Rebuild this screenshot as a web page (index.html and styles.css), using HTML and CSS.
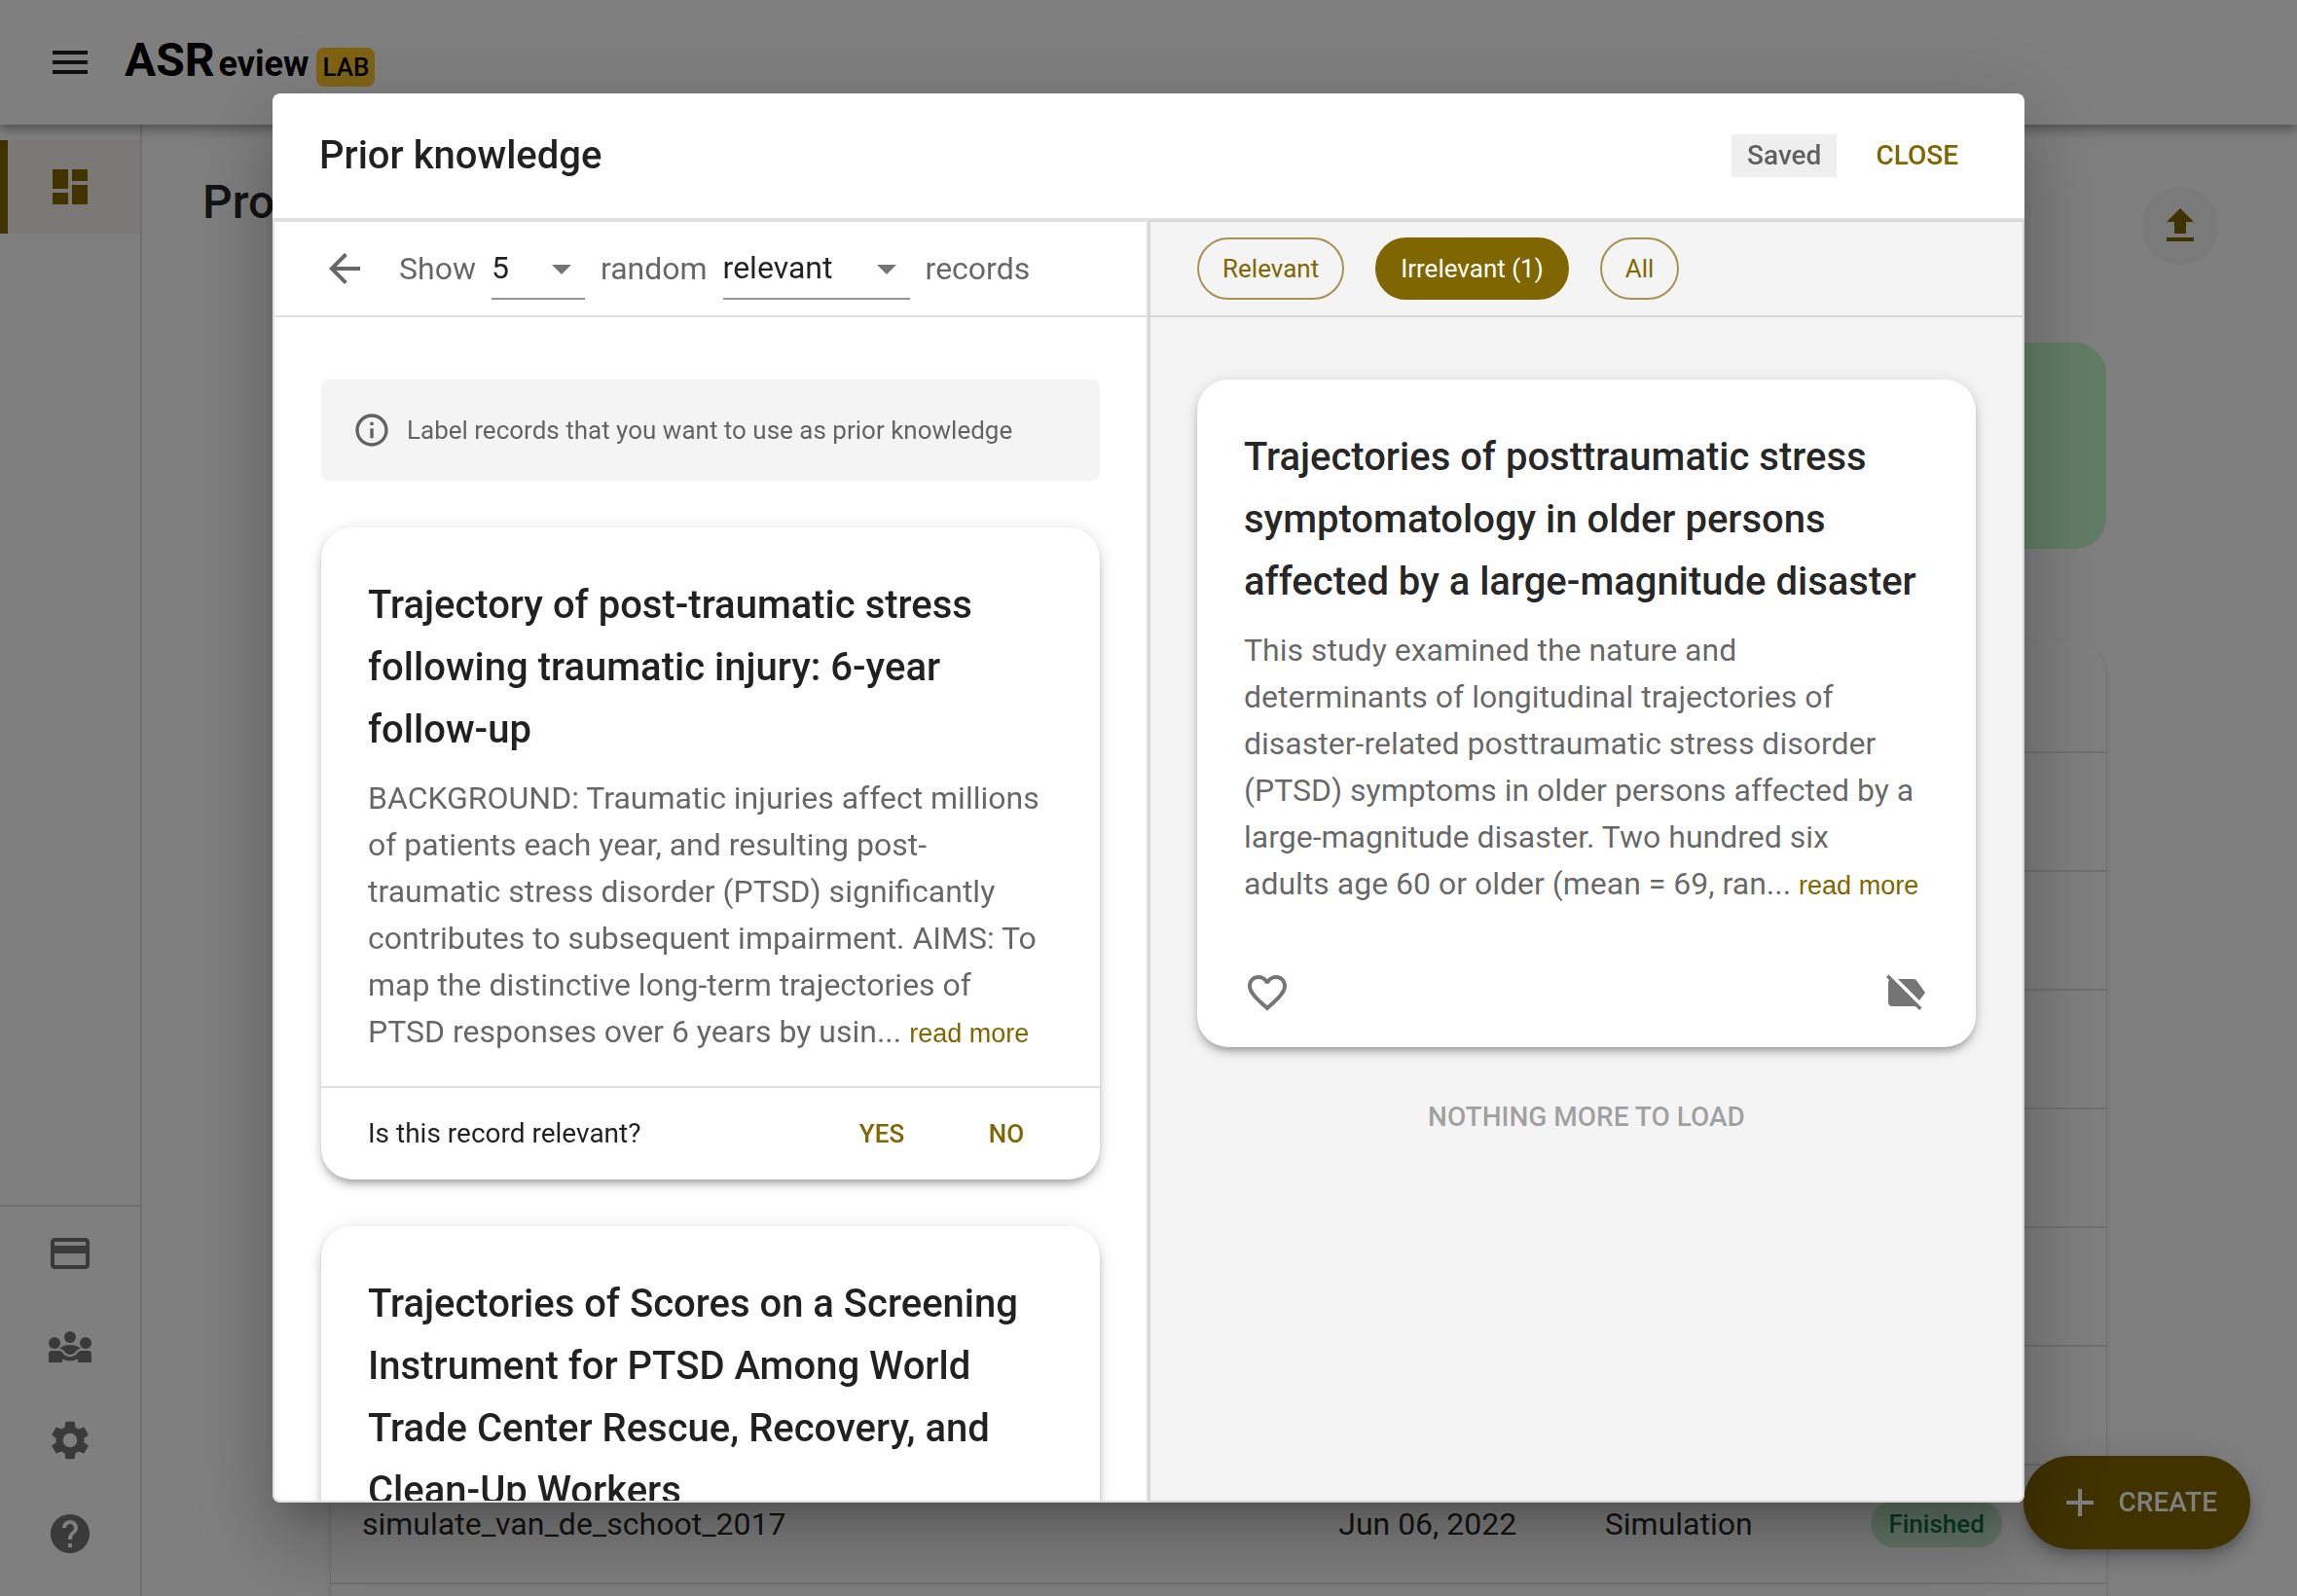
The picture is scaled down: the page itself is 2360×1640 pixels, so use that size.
FILE: index.html
```html
<!DOCTYPE html>
<html lang="en">
<head>
<meta charset="utf-8">
<title>ASReview LAB</title>
<meta name="viewport" content="width=device-width, initial-scale=1">
<link rel="stylesheet" href="styles.css">
</head>
<body>
<div class="app">
  <header class="topbar">
    <button class="icon-button" type="button" aria-label="Menu">
      <svg class="icon" viewBox="0 0 24 24"><path d="M3 18h18v-2H3v2zm0-5h18v-2H3v2zm0-7v2h18V6H3z"/></svg>
    </button>
    <a class="logo" href="#"><span class="logo-name"><span class="logo-big">ASR</span>eview</span><span class="logo-badge">LAB</span></a>
  </header>
  <div class="body">
    <nav class="sidebar">
      <a class="nav-item nav-active" href="#" aria-label="Projects">
        <svg class="icon" viewBox="0 0 24 24"><path d="M3 13h8V3H3v10zm0 8h8v-6H3v6zm10 0h8V11h-8v10zm0-18v6h8V3h-8z"/></svg>
      </a>
      <div class="nav-bottom">
        <a class="nav-item" href="#" aria-label="Donate">
          <svg class="icon" viewBox="0 0 24 24"><path d="M20 4H4c-1.110 0-1.990.89-1.990 2L2 18c0 1.110.89 2 2 2h16c1.110 0 2-.89 2-2V6c0-1.110-.89-2-2-2zm0 14H4v-6h16v6zm0-10H4V6h16v2z"/></svg>
        </a>
        <a class="nav-item" href="#" aria-label="Community">
          <svg class="icon" viewBox="0 0 24 24"><circle cx="4" cy="10" r="3"/><circle cx="20" cy="10" r="3"/><circle cx="12" cy="7" r="3"/><path d="M6.500 12.700C8 11.600 9.900 11 12 11s4 .6 5.500 1.700c-1 .2-1.700.6-2.300 1.300-.8 1.200-1.900 2-3.200 2s-2.400-.8-3.200-2c-.6-.7-1.300-1.100-2.300-1.300zM1 20v-4.500C1 14.600 1.700 14 2.500 14h3.800c.7 0 1.300.3 1.700.9.9 1.400 2.400 2.200 4 2.200s3.100-.8 4-2.200c.4-.6 1-.9 1.700-.9h3.800c.8 0 1.500.6 1.500 1.500V20h-7v-1.800c-1.200.6-2.500.9-4 .9s-2.800-.3-4-.9V20z"/></svg>
        </a>
        <a class="nav-item" href="#" aria-label="Settings">
          <svg class="icon" viewBox="0 0 24 24"><path d="M19.140 12.940c.04-.3.060-.61.060-.94 0-.32-.02-.64-.07-.94l2.030-1.580c.18-.14.230-.41.120-.61l-1.920-3.320c-.12-.22-.37-.29-.59-.22l-2.390.96c-.5-.38-1.030-.7-1.620-.94l-.36-2.540c-.04-.24-.24-.41-.48-.41h-3.840c-.24 0-.43.17-.47.41l-.36 2.540c-.59.24-1.130.57-1.620.94l-2.390-.96c-.22-.08-.47 0-.59.22L2.740 8.870c-.12.21-.08.470.12.610l2.030 1.580c-.05.3-.09.630-.09.940s.02.640.070.940l-2.030 1.580c-.18.14-.23.410-.12.610l1.920 3.320c.12.220.37.290.59.220l2.390-.96c.5.380 1.030.7 1.620.94l.36 2.540c.05.240.24.410.48.410h3.840c.24 0 .44-.17.470-.41l.36-2.540c.59-.24 1.130-.56 1.620-.94l2.390.96c.22.080.47 0 .59-.22l1.920-3.320c.12-.22.070-.47-.12-.61l-2.010-1.580zM12 15.600c-1.980 0-3.600-1.620-3.600-3.600s1.620-3.600 3.600-3.600 3.600 1.620 3.600 3.600-1.620 3.600-3.600 3.600z"/></svg>
        </a>
        <a class="nav-item" href="#" aria-label="Help">
          <svg class="icon" viewBox="0 0 24 24"><path d="M12 2C6.480 2 2 6.480 2 12s4.480 10 10 10 10-4.480 10-10S17.520 2 12 2zm1 17h-2v-2h2v2zm2.070-7.750l-.9.920C13.450 12.900 13 13.500 13 15h-2v-.5c0-1.100.45-2.100 1.170-2.830l1.240-1.260c.37-.36.590-.86.590-1.410 0-1.100-.9-2-2-2s-2 .9-2 2H8c0-2.210 1.790-4 4-4s4 1.790 4 4c0 .88-.36 1.680-.93 2.250z"/></svg>
        </a>
      </div>
    </nav>
    <main class="main">
      <div class="page-head">
        <h1 class="page-title">Projects</h1>
        <button class="upload" type="button" aria-label="Import project">
          <svg class="icon" viewBox="0 0 24 24"><path d="M9 16h6v-6h4l-7-7-7 7h4v6zm-4 2h14v2H5v-2z"/></svg>
        </button>
      </div>
      <div class="dashboard">
        <div class="stats"></div>
        <table class="projects">
          <thead><tr><th></th><th class="col-side"></th><th class="col-side"></th><th class="col-side"></th></tr></thead>
          <tbody>
            <tr><td></td><td></td><td></td><td></td></tr>
            <tr><td></td><td></td><td></td><td></td></tr>
            <tr><td></td><td></td><td></td><td></td></tr>
            <tr><td></td><td></td><td></td><td></td></tr>
            <tr><td></td><td></td><td></td><td></td></tr>
            <tr><td></td><td></td><td></td><td></td></tr>
            <tr><td>simulate_van_de_schoot_2017</td><td>Jun 06, 2022</td><td>Simulation</td><td><span class="status">Finished</span></td></tr>
            <tr><td></td><td></td><td></td><td></td></tr>
          </tbody>
        </table>
      </div>
    </main>
  </div>
  <button class="create" type="button">
    <svg class="icon" viewBox="0 0 24 24"><path d="M19 13h-6v6h-2v-6H5v-2h6V5h2v6h6v2z"/></svg>
    CREATE
  </button>
</div>

<div class="backdrop">
  <section class="dialog" role="dialog" aria-modal="true" aria-labelledby="dialog-title">
    <header class="dialog-head">
      <h2 class="dialog-title" id="dialog-title">Prior knowledge</h2>
      <span class="saved">Saved</span>
      <button class="text-button close" type="button">CLOSE</button>
    </header>
    <div class="panels">
      <section class="panel">
        <div class="toolbar">
          <button class="icon-button" type="button" aria-label="Back">
            <svg class="icon" viewBox="0 0 24 24"><path d="M20 11H7.830l5.590-5.590L12 4l-8 8 8 8 1.410-1.410L7.830 13H20v-2z"/></svg>
          </button>
          <label for="count">Show</label>
          <span class="select count">
            <select id="count"><option>5</option></select>
            <svg class="icon caret" viewBox="0 0 24 24"><path d="M7 10l5 5 5-5z"/></svg>
          </span>
          <label for="kind">random</label>
          <span class="select kind">
            <select id="kind"><option>relevant</option></select>
            <svg class="icon caret" viewBox="0 0 24 24"><path d="M7 10l5 5 5-5z"/></svg>
          </span>
          <span>records</span>
        </div>
        <div class="panel-body">
          <div class="alert">
            <svg class="icon-small" viewBox="0 0 24 24"><path d="M11 7h2v2h-2zm0 4h2v6h-2zm1-9C6.480 2 2 6.480 2 12s4.480 10 10 10 10-4.480 10-10S17.520 2 12 2zm0 18c-4.410 0-8-3.590-8-8s3.590-8 8-8 8 3.590 8 8-3.590 8-8 8z"/></svg>
            <span>Label records that you want to use as prior knowledge</span>
          </div>
          <article class="card">
            <div class="card-content">
              <h3 class="card-title">Trajectory of post-traumatic stress following traumatic injury: 6-year follow-up</h3>
              <p class="abstract">BACKGROUND: Traumatic injuries affect millions of patients each year, and resulting post-traumatic stress disorder (PTSD) significantly contributes to subsequent impairment. AIMS: To map the distinctive long-term trajectories of PTSD responses over 6 years by usin... <a class="more" href="#">read more</a></p>
            </div>
            <div class="card-question">
              <span class="question">Is this record relevant?</span>
              <button class="text-button answer" type="button">YES</button>
              <button class="text-button answer" type="button">NO</button>
            </div>
          </article>
          <article class="card">
            <div class="card-content">
              <h3 class="card-title">Trajectories of Scores on a Screening Instrument for PTSD Among World Trade Center Rescue, Recovery, and Clean-Up Workers</h3>
            </div>
          </article>
        </div>
      </section>
      <section class="panel panel-labeled">
        <div class="toolbar filters">
          <button class="chip" type="button">Relevant</button>
          <button class="chip chip-on" type="button">Irrelevant (1)</button>
          <button class="chip" type="button">All</button>
        </div>
        <div class="panel-body">
          <article class="card">
            <div class="card-content">
              <h3 class="card-title">Trajectories of posttraumatic stress symptomatology in older persons affected by a large-magnitude disaster</h3>
              <p class="abstract">This study examined the nature and determinants of longitudinal trajectories of disaster-related posttraumatic stress disorder (PTSD) symptoms in older persons affected by a large-magnitude disaster. Two hundred six adults age 60 or older (mean = 69, ran... <a class="more" href="#">read more</a></p>
            </div>
            <div class="card-actions">
              <button class="card-icon" type="button" aria-label="Mark as relevant">
                <svg class="icon" viewBox="0 0 24 24"><path d="M16.500 3c-1.740 0-3.410.81-4.500 2.090C10.910 3.810 9.240 3 7.500 3 4.420 3 2 5.420 2 8.500c0 3.780 3.400 6.860 8.550 11.540L12 21.350l1.450-1.320C18.600 15.360 22 12.280 22 8.500 22 5.420 19.580 3 16.500 3zm-4.400 15.550l-.1.100-.1-.1C7.140 14.240 4 11.390 4 8.500 4 6.500 5.500 5 7.500 5c1.540 0 3.040.99 3.570 2.360h1.870C13.460 5.990 14.960 5 16.500 5c2 0 3.500 1.500 3.500 3.500 0 2.890-3.140 5.740-7.900 10.050z"/></svg>
              </button>
              <button class="card-icon" type="button" aria-label="Remove label">
                <svg class="icon" viewBox="0 0 24 24"><path d="M3.250 2.750l17 17L19 21l-2-2H5c-1.100 0-2-.9-2-2V7c0-.55.230-1.050.59-1.410L2 4l1.250-1.250zM22 12l-4.370-6.160C17.270 5.330 16.670 5 16 5H8l11 11 3-4z"/></svg>
              </button>
            </div>
          </article>
          <button class="load" type="button" disabled>NOTHING MORE TO LOAD</button>
        </div>
      </section>
    </div>
  </section>
</div>
</body>
</html>
```

FILE: styles.css
```css
:root {
  --primary: #806600;
  --ink: rgba(0, 0, 0, 0.87);
  --muted: rgba(0, 0, 0, 0.6);
  --line: #e0e0e0;
}

* { box-sizing: border-box; }

body {
  margin: 0;
  font-family: Roboto, "Liberation Sans", sans-serif;
  font-size: 32px;
  line-height: 48px;
  color: var(--ink);
  background: #fff;
}

h1, h2, h3, p { margin: 0; font-weight: 400; }

button {
  border: 0;
  padding: 0;
  background: none;
  font: inherit;
  color: inherit;
  cursor: pointer;
}

a { color: inherit; text-decoration: none; }

.icon, .icon-small {
  display: block;
  flex: none;
  width: 48px;
  height: 48px;
  fill: currentColor;
}

.icon-small { width: 40px; height: 40px; }

.icon-button { flex: none; padding: 16px; }

/* Application frame */
.app {
  display: flex;
  flex-direction: column;
  height: 100vh;
  overflow: hidden;
}

.topbar {
  position: relative;
  display: flex;
  flex: none;
  align-items: center;
  gap: 16px;
  height: 128px;
  padding: 0 32px;
  background: #fff;
  box-shadow: 0 4px 8px -2px rgba(0, 0, 0, 0.2), 0 8px 10px rgba(0, 0, 0, 0.14), 0 2px 20px rgba(0, 0, 0, 0.12);
}

.logo {
  display: flex;
  align-items: baseline;
  gap: 8px;
  color: #000;
  font-weight: 700;
}

.logo-name { font-size: 36px; }
.logo-big { margin-right: 4px; font-size: 48px; }

.logo-badge {
  padding: 0 6px;
  border-radius: 8px;
  background: #ffc926;
  font-size: 26px;
  font-weight: 500;
  line-height: 40px;
}

.body { display: flex; flex: 1; min-height: 0; }

.sidebar {
  display: flex;
  flex: none;
  flex-direction: column;
  justify-content: space-between;
  width: 146px;
  padding-top: 16px;
  border-right: 2px solid var(--line);
}

.nav-item {
  display: flex;
  align-items: center;
  justify-content: center;
  height: 96px;
  color: #757575;
}

.nav-active {
  padding-right: 8px;
  border-left: 8px solid var(--primary);
  background: #f5f2eb;
  color: var(--primary);
}

.nav-bottom { padding-bottom: 16px; border-top: 2px solid var(--line); }

.main { flex: 1; min-width: 0; }

.page-head {
  display: flex;
  align-items: flex-start;
  justify-content: space-between;
  padding: 48px 80px 80px 62px;
}

.page-title { font-size: 48px; font-weight: 500; line-height: 64px; }

.upload {
  margin-top: 16px;
  padding: 16px;
  border-radius: 50%;
  background: #f5f5f5;
  color: var(--primary);
}

.dashboard { padding: 0 196px 0 194px; }

.stats {
  height: 212px;
  margin-bottom: 96px;
  border-radius: 32px;
  background: #c5fbcc;
}

.projects {
  width: 100%;
  table-layout: fixed;
  border-collapse: separate;
  border-spacing: 0;
  border-radius: 32px;
  box-shadow: 0 4px 2px -2px rgba(0, 0, 0, 0.2), 0 2px 2px rgba(0, 0, 0, 0.14), 0 2px 6px rgba(0, 0, 0, 0.12);
}

.projects th { height: 114px; border-bottom: 2px solid var(--line); }

.projects td {
  height: 122px;
  padding: 0 32px;
  border-bottom: 2px solid var(--line);
}

.col-side { width: 15%; }

.status {
  display: block;
  width: fit-content;
  padding: 0 18px;
  border-radius: 24px;
  background: #c5ebcf;
  color: #157347;
  font-size: 26px;
  font-weight: 500;
}

.create {
  position: fixed;
  right: 48px;
  bottom: 48px;
  display: flex;
  align-items: center;
  gap: 16px;
  height: 96px;
  padding: 0 34px;
  border-radius: 48px;
  background: var(--primary);
  color: #fff;
  font-size: 28px;
  font-weight: 500;
  box-shadow: 0 6px 10px -2px rgba(0, 0, 0, 0.2), 0 12px 20px rgba(0, 0, 0, 0.14), 0 2px 36px rgba(0, 0, 0, 0.12);
}

/* Dialog */
.backdrop {
  position: fixed;
  inset: 0;
  display: flex;
  justify-content: center;
  padding: 96px;
  background: rgba(0, 0, 0, 0.5);
}

.dialog {
  display: flex;
  flex-direction: column;
  width: 100%;
  max-width: 1800px;
  overflow: hidden;
  border-radius: 8px;
  background: #fff;
  box-shadow: 0 22px 30px -14px rgba(0, 0, 0, 0.2), 0 48px 76px 6px rgba(0, 0, 0, 0.14), 0 18px 92px 16px rgba(0, 0, 0, 0.12);
}

.dialog-head {
  display: flex;
  flex: none;
  align-items: center;
  height: 130px;
  padding: 0 52px 0 48px;
  border-bottom: 2px solid var(--line);
}

.dialog-title { flex: 1; font-size: 40px; font-weight: 500; }

.saved {
  padding: 0 16px;
  background: #efefef;
  color: var(--muted);
  font-size: 28px;
  font-weight: 500;
  line-height: 44px;
}

.text-button { color: var(--primary); font-weight: 500; }

.close { margin-left: 24px; padding: 0 16px; font-size: 28px; }

.panels {
  display: grid;
  flex: 1;
  grid-template-columns: 1fr 1fr;
  min-height: 0;
}

.panel {
  display: flex;
  flex-direction: column;
  min-width: 0;
  min-height: 0;
  border: 2px solid var(--line);
}

.panel:first-child { border-bottom-left-radius: 8px; }

.panel-labeled {
  border-color: #d7d7d7;
  border-bottom-right-radius: 8px;
  background: #f4f4f4;
}

.toolbar {
  display: flex;
  flex: none;
  align-items: center;
  gap: 16px;
  height: 98px;
  padding: 0 32px;
  border-bottom: 2px solid var(--line);
  color: var(--muted);
}

.filters { gap: 32px; padding: 0 48px; border-color: #d7d7d7; }

.select {
  position: relative;
  border-bottom: 2px solid #949494;
}

.select select {
  display: block;
  width: 100%;
  height: 62px;
  border: 0;
  padding: 0 48px 0 0;
  appearance: none;
  background: none;
  color: var(--ink);
  font: inherit;
}

.count { width: 96px; }
.kind { width: 192px; }

.caret {
  position: absolute;
  top: 8px;
  right: 0;
  color: #757575;
  pointer-events: none;
}

.chip {
  height: 64px;
  padding: 0 24px;
  border: 2px solid #a69354;
  border-radius: 32px;
  color: var(--primary);
  font-size: 26px;
}

.chip-on {
  border-color: var(--primary);
  background: var(--primary);
  color: #fff;
}

.panel-body {
  display: flex;
  flex: 1;
  flex-direction: column;
  gap: 48px;
  min-height: 0;
  padding: 64px 48px 0;
  overflow: hidden;
}

.alert {
  display: flex;
  flex: none;
  align-items: center;
  gap: 16px;
  height: 104px;
  padding: 0 32px;
  border-radius: 8px;
  background: #f4f4f4;
  color: var(--muted);
  font-size: 26px;
}

.card {
  flex: none;
  border-radius: 32px;
  background: #fff;
  box-shadow: 0 6px 6px -4px rgba(0, 0, 0, 0.2), 0 6px 8px rgba(0, 0, 0, 0.14), 0 2px 16px rgba(0, 0, 0, 0.12);
}

.card-content { padding: 48px 48px 32px; }

.card-title {
  font-size: 40px;
  font-weight: 500;
  line-height: 64px;
}

.abstract {
  margin-top: 14px;
  padding-right: 8px;
  color: var(--muted);
}

.more {
  color: var(--primary);
  font-family: "Liberation Sans", Arial, sans-serif;
  font-size: 27px;
  line-height: 32px;
}

.card-question {
  display: flex;
  align-items: center;
  height: 96px;
  padding: 0 32px 0 48px;
  border-top: 2px solid var(--line);
}

.question { flex: 1; font-size: 28px; }

.answer { width: 128px; font-size: 26px; }

.card-actions {
  display: flex;
  justify-content: space-between;
  padding: 32px 48px;
  color: #757575;
}

.load {
  color: rgba(0, 0, 0, 0.36);
  font-size: 28px;
  font-weight: 500;
}
```
